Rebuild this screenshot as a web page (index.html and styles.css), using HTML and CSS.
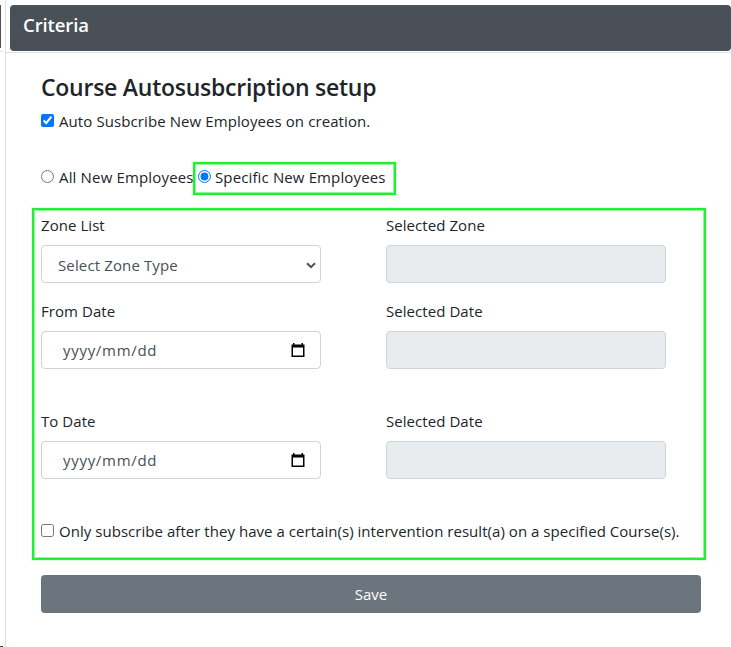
FILE: index.html
```
<!DOCTYPE html>
<html lang="en">
<head>
<meta charset="utf-8">
<title>Criteria</title>
<link rel="stylesheet" href="styles.css">
</head>
<body>
<div class="page">
  <aside class="side"><div class="side-head"></div><i class="dots"></i></aside>
  <main class="panel">
    <header class="head"><h2>Criteria</h2></header>
    <form class="body">
      <h1><span>Course Autosusbcription setup</span></h1>
      <label class="check auto"><input type="checkbox" checked><span>Auto Susbcribe New Employees on creation.</span></label>
      <div class="choices">
        <label class="check all"><input type="radio" name="who"><span>All New Employees</span></label>
        <label class="check specific"><input type="radio" name="who" checked><span>Specific New Employees</span></label>
      </div>
      <section class="group">
        <div class="fields">
          <div class="field"><label><span>Zone List</span></label>
            <div class="control select"><span>Select Zone Type</span><svg class="chevron" width="10" height="7" viewBox="0 0 10 7"><path d="M1 1.2 5 5.2 9 1.2" fill="none" stroke="#495057" stroke-width="2"/></svg></div></div>
          <div class="field"><label><span>Selected Zone</span></label><div class="control disabled"></div></div>
          <div class="field"><label><span>From Date</span></label>
            <div class="control date"><span>yyyy/mm/dd</span><svg width="14" height="15" viewBox="0 0 14 15"><path d="M2 0h1.5v1.5h7V0H12v1.5h1.5v12.5H.5V1.5H2zM2 4.5v8h10v-8z" fill="#000" fill-rule="evenodd"/></svg></div></div>
          <div class="field"><label><span>Selected Date</span></label><div class="control disabled"></div></div>
          <div class="field"><label><span>To Date</span></label>
            <div class="control date"><span>yyyy/mm/dd</span><svg width="14" height="15" viewBox="0 0 14 15"><path d="M2 0h1.5v1.5h7V0H12v1.5h1.5v12.5H.5V1.5H2zM2 4.5v8h10v-8z" fill="#000" fill-rule="evenodd"/></svg></div></div>
          <div class="field"><label><span>Selected Date</span></label><div class="control disabled"></div></div>
        </div>
        <label class="check only"><input type="checkbox"><span>Only subscribe after they have a certain(s) intervention result(a) on a specified Course(s).</span></label>
      </section>
      <button class="save" type="button">Save</button>
    </form>
  </main>
</div>
</body>
</html>
```
FILE: styles.css
```
* { box-sizing: border-box; }
body {
  margin: 0;
  background: #fff;
  color: #212529;
  font: 15px/24px "Segoe UI", "Open Sans", "Noto Sans", sans-serif;
  overflow: hidden;
}
.page { display: flex; height: 647px; }
.side { width: 5px; flex: none; display: flex; flex-direction: column; padding-top: 5px; }
.side-head { height: 47px; width: 3px; border-bottom: 1px solid #dfdfdf; background: linear-gradient(#495057, #495057) 0 0 / 1px 43px no-repeat; }
.dots { width: 3px; height: 1px; margin-top: auto; background: linear-gradient(90deg, #f00 1px, #080 1px 2px, #00f 2px); }
.panel { flex: 1; min-width: 0; border-left: 1px solid #dfdfdf; padding-top: 5px; }
.head { border-bottom: 1px solid #dfdfdf; height: 48px; padding-left: 4px; }
.head h2 {
  margin: 0; height: 46px; padding: 8px 13px; border-radius: 4px;
  background: #495057; color: #fff; font-size: 18.5px; line-height: 24px; font-weight: 600; letter-spacing: -.1px;
}
.body { padding: 20px 25px 0 26px; display: flex; flex-direction: column; }
h1 { margin: 0 0 0 9px; font-size: 23px; line-height: 29px; font-weight: 600; letter-spacing: -.25px; white-space: nowrap; }
.check { display: flex; align-items: center; white-space: nowrap; height: 24px; letter-spacing: .09px; }
.check input { width: 13px; height: 13px; margin: 0 5px 2px 0; flex: none; accent-color: #0075ff; }
.auto { margin: 7px 0 0 9px; }
.choices { display: flex; margin: 29px 0 0 9px; height: 33px; align-items: center; letter-spacing: .12px; }
.all { width: 152px; height: 33px; padding-bottom: 4px; letter-spacing: .16px; }
.specific { width: 203px; height: 33px; padding: 0 0 4px 3px; letter-spacing: .13px; }
.choices input { margin-bottom: 1px; }
.specific input { margin-right: 4px; }
.specific, .group { border: 2px solid #22ee33; box-shadow: 0 0 0 1px #22ee3322, inset 0 0 0 1px #22ee3380; }
.group { margin-top: 13px; width: 674px; height: 352px; padding: 3px 7px 0; }
.only { letter-spacing: .04px; }
.fields { display: grid; grid-template-columns: 280px 280px; column-gap: 65px; grid-template-rows: 86px 110px 110px; }
.field label { display: block; height: 32px; line-height: 24px; letter-spacing: .06px; }
.control { width: 280px; height: 38px; border: 1px solid #ced4da; border-radius: 4px; color: #495057; display: flex; align-items: center; justify-content: space-between; }
.select { padding: 2px 4px 0 16px; letter-spacing: .13px; }
.date { padding: 0 15px 0 21px; letter-spacing: .7px; }
.disabled { background: #e9ecef; }
.save { margin: 15px 0 0 9px; width: 660px; height: 38px; border: 0; border-radius: 4px; background: #6c757d; color: #fff; font: inherit; }
```
